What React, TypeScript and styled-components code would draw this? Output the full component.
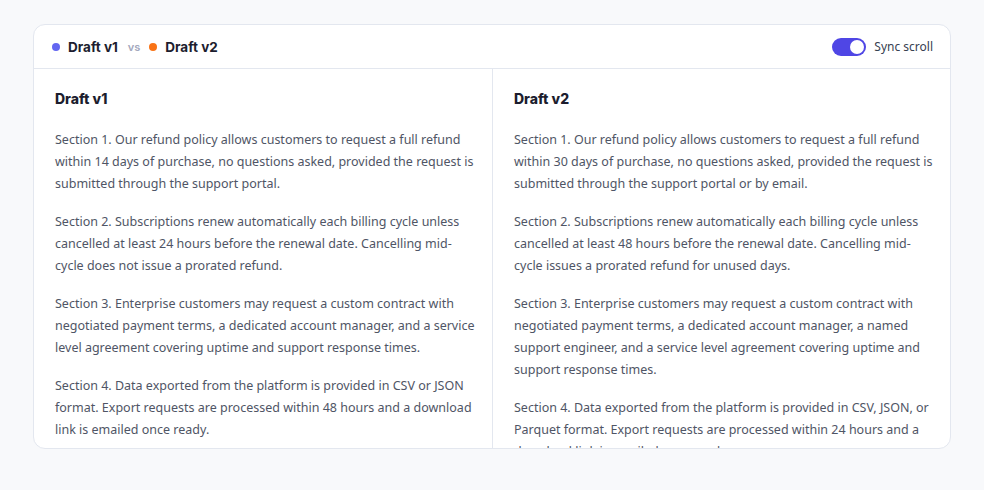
import styled, { createGlobalStyle } from "styled-components";

const GlobalStyle = createGlobalStyle`
  html, body {
    margin: 0;
    padding: 0;
    background: #f8f9fb;
  }
  * {
    box-sizing: border-box;
  }
`;

const Page = styled.div`
  padding: 24px 33px;
  font-family: "Noto Sans", "Open Sans", sans-serif;
`;

const Card = styled.div`
  background: #ffffff;
  border: 1px solid #e3e7ef;
  border-radius: 12px;
  height: 425px;
  display: flex;
  flex-direction: column;
  overflow: hidden;
`;

const Header = styled.div`
  height: 44px;
  flex-shrink: 0;
  display: flex;
  align-items: center;
  justify-content: space-between;
  padding: 0 17px 0 18px;
  border-bottom: 1px solid #e3e7ef;
`;

const Versions = styled.div`
  display: flex;
  align-items: center;
`;

const Dot = styled.span<{ $color: string }>`
  width: 8px;
  height: 8px;
  border-radius: 50%;
  background: ${(p) => p.$color};
  margin-right: 8px;
`;

const VersionName = styled.span`
  font-family: Inter, "Noto Sans", sans-serif;
  font-weight: 700;
  font-size: 13.5px;
  color: #1c1d2e;
`;

const Vs = styled.span`
  font-family: Inter, "Noto Sans", sans-serif;
  font-size: 11px;
  font-weight: 600;
  color: #a3a8bd;
  margin: 0 9px 0 10px;
`;

const SyncLabel = styled.label`
  display: flex;
  align-items: center;
  gap: 8px;
  font-size: 12px;
  color: #374151;
  cursor: pointer;
`;

const Toggle = styled.span<{ $on: boolean }>`
  position: relative;
  width: 34px;
  height: 18px;
  border-radius: 9px;
  background: ${(p) => (p.$on ? "#4f46e5" : "#d1d5db")};

  &::after {
    content: "";
    position: absolute;
    top: 2px;
    left: ${(p) => (p.$on ? "18px" : "2px")};
    width: 14px;
    height: 14px;
    border-radius: 50%;
    background: #ffffff;
  }
`;

const Columns = styled.div`
  flex: 1;
  min-height: 0;
  display: grid;
  grid-template-columns: 458px 1fr;
`;

const Column = styled.div<{ $divider?: boolean }>`
  padding: 21px 15px 0 21px;
  overflow-y: auto;
  scrollbar-width: none;
  border-left: ${(p) => (p.$divider ? "1px solid #e3e7ef" : "none")};
`;

const Title = styled.h3`
  font-family: Inter, "Noto Sans", sans-serif;
  margin: 0 0 21px;
  font-size: 14px;
  font-weight: 800;
  color: #1c1d2e;
  line-height: 18px;
`;

const Para = styled.p`
  margin: 0 0 16px;
  font-size: 12.5px;
  line-height: 22px;
  color: #4f5565;
`;

const v1 = [
  "Section 1. Our refund policy allows customers to request a full refund within 14 days of purchase, no questions asked, provided the request is submitted through the support portal.",
  "Section 2. Subscriptions renew automatically each billing cycle unless cancelled at least 24 hours before the renewal date. Cancelling mid-cycle does not issue a prorated refund.",
  "Section 3. Enterprise customers may request a custom contract with negotiated payment terms, a dedicated account manager, and a service level agreement covering uptime and support response times.",
  "Section 4. Data exported from the platform is provided in CSV or JSON format. Export requests are processed within 48 hours and a download link is emailed once ready.",
];

const v2 = [
  "Section 1. Our refund policy allows customers to request a full refund within 30 days of purchase, no questions asked, provided the request is submitted through the support portal or by email.",
  "Section 2. Subscriptions renew automatically each billing cycle unless cancelled at least 48 hours before the renewal date. Cancelling mid-cycle issues a prorated refund for unused days.",
  "Section 3. Enterprise customers may request a custom contract with negotiated payment terms, a dedicated account manager, a named support engineer, and a service level agreement covering uptime and support response times.",
  "Section 4. Data exported from the platform is provided in CSV, JSON, or Parquet format. Export requests are processed within 24 hours and a download link is emailed once ready.",
];

export default function App() {
  return (
    <>
      <GlobalStyle />
      <Page>
        <Card>
          <Header>
            <Versions>
              <Dot $color="#6366f1" />
              <VersionName>Draft v1</VersionName>
              <Vs>vs</Vs>
              <Dot $color="#f97316" />
              <VersionName>Draft v2</VersionName>
            </Versions>
            <SyncLabel>
              <Toggle $on />
              Sync scroll
            </SyncLabel>
          </Header>
          <Columns>
            <Column>
              <Title>Draft v1</Title>
              {v1.map((t) => (
                <Para key={t}>{t}</Para>
              ))}
            </Column>
            <Column $divider>
              <Title>Draft v2</Title>
              {v2.map((t) => (
                <Para key={t}>{t}</Para>
              ))}
            </Column>
          </Columns>
        </Card>
      </Page>
    </>
  );
}
